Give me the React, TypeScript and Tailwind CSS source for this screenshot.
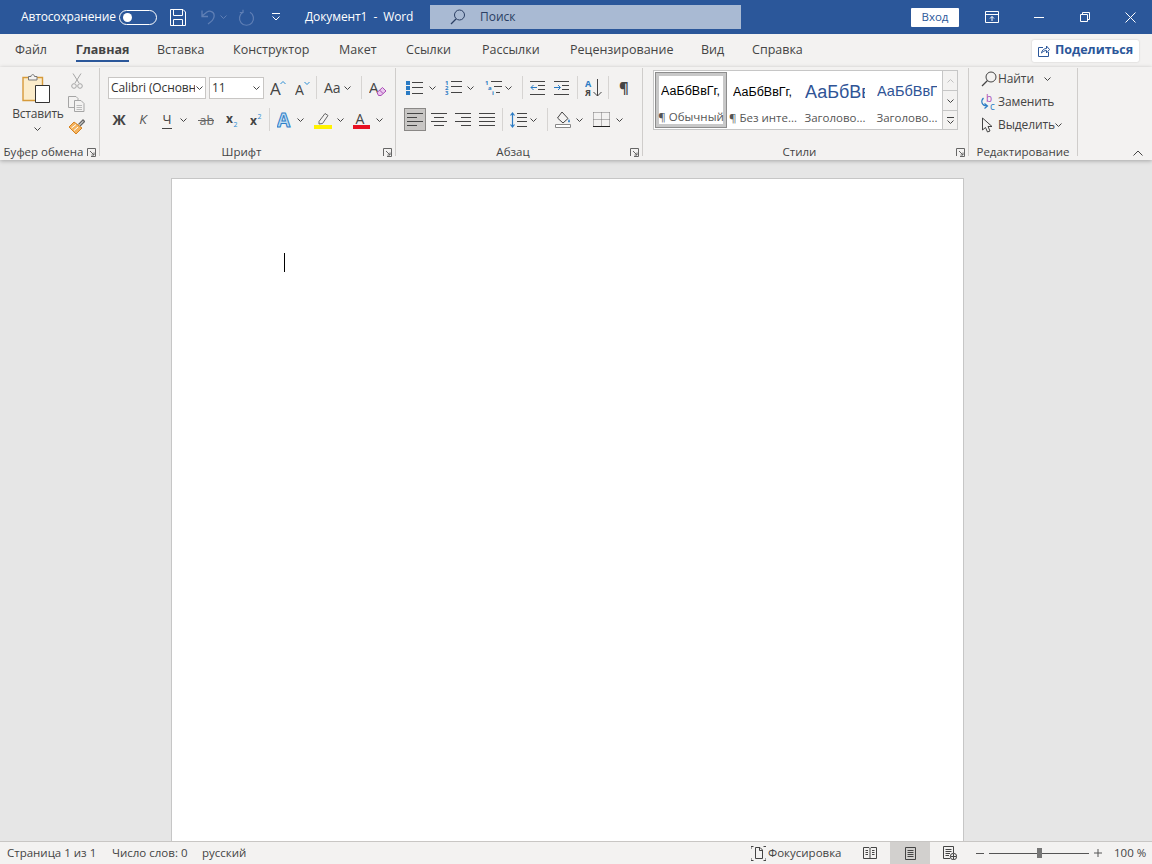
import React from "react";

const G = "#444444";
const Chev = ({ className = "", color = G }: { className?: string; color?: string }) => (
  <svg width="7" height="4" viewBox="0 0 7 4" className={`shrink-0 ${className}`}>
    <path d="M.5.5 3.5 3.5 6.5.5" fill="none" stroke={color} strokeWidth="1" />
  </svg>
);
const Sep = ({ className = "" }: { className?: string }) => <div className={`w-px h-[23px] bg-[#d6d4d2] shrink-0 ${className}`} />;
const Ico = ({ w, h, className = "", children }: { w: number; h: number; className?: string; children: React.ReactNode }) => (
  <svg width={w} height={h} viewBox={`0 0 ${w} ${h}`} className={`shrink-0 ${className}`} fill="none">{children}</svg>
);
const Lines = ({ rows, stroke = G }: { rows: [number, number, number][]; stroke?: string }) => (
  <>{rows.map(([x1, x2, y], i) => <path key={i} d={`M${x1} ${y}.5H${x2}`} stroke={stroke} />)}</>
);
const Launcher = () => (
  <Ico w={9} h={9} className="mr-[3px]">
    <path d="M.5 8V.5H8.5V8.5H4" stroke="#666" />
    <path d="M3 3 7 7M7 4.5V7H4.5" stroke="#666" />
  </Ico>
);
const Group = ({ label, launcher, width, pt = "pt-[8px]", children }: { label: string; launcher?: boolean; width: string; pt?: string; children: React.ReactNode }) => (
  <div className={`${width} shrink-0 h-[88px] mt-px border-r border-[#cfcdcb] flex flex-col ${pt}`}>
    <div className="flex-1 min-h-0">{children}</div>
    <div className="h-[16px] mb-[-4px] flex items-center relative text-[11.5px] text-[#444] leading-[16px]">
      <span className="flex-1 text-center">{label}</span>
      {launcher && <Launcher />}
    </div>
  </div>
);
const Row = ({ className = "", children }: { className?: string; children: React.ReactNode }) => (
  <div className={`flex items-center h-[23px] ${className}`}>{children}</div>
);
const Tab = ({ className = "", children }: { className?: string; children: React.ReactNode }) => (
  <span className={`text-[12.5px] text-[#444] whitespace-nowrap ${className}`}>{children}</span>
);
const StyleItem = ({ sample, label, sel, sampleClass }: { sample: string; label: string; sel?: boolean; sampleClass: string }) => (
  <div className={`w-[72px] h-[56px] shrink-0 overflow-hidden ${sel ? "border border-[#8d8d8d]" : ""}`}>
    <div className={`h-full flex flex-col items-center ${sel ? "border-[3px] border-[#c8c8c8]" : "pt-[4px] px-[4px]"}`}>
      <div className={`w-[60px] h-[32px] flex items-center overflow-hidden whitespace-nowrap ${sampleClass}`}>{sample}</div>
      <div className="text-[11.5px] text-[#555] whitespace-nowrap mt-[3px] leading-[14px]">{label}</div>
    </div>
  </div>
);
const ScrollBtn = ({ children, className = "" }: { children?: React.ReactNode; className?: string }) => (
  <div className={`h-[20px] flex flex-col items-center justify-center border-[#c6c6c6] bg-[#f3f2f1] ${className}`}>{children}</div>
);

export default function App() {
  return (
    <div className="w-[1152px] h-[864px] overflow-hidden flex flex-col bg-[#e6e6e6] font-['Open_Sans','Noto_Sans',sans-serif]">
      {/* Title bar */}
      <div className="h-[34px] shrink-0 bg-[#2b579a] flex items-center text-white">
        <span className="ml-[21px] w-[92px] text-[12px] tracking-[-0.15px] whitespace-nowrap">Автосохранение</span>
        <div className="ml-[6px] w-[38px] h-[15px] rounded-full border border-white flex items-center pl-[3px]">
          <div className="w-[9px] h-[9px] rounded-full bg-white" />
        </div>
        <Ico w={16} h={17} className="ml-[13px]">
          <path d="M.5.5H13L15.5 3V16.5H.5Z" stroke="#fff" />
          <path d="M3.5 1V6.5H12.5V1M3.5 16V10.5H12.5V16" stroke="#fff" />
        </Ico>
        <Ico w={16} h={16} className="ml-[14px]">
          <path d="M2 1.5V7.5H8M2 7 7 3C10 1 15 3 14 8 13.5 11 11 13 8 15" stroke="#5f7fb5" strokeWidth="1.3" />
        </Ico>
        <Chev className="ml-[4px]" color="#5f7fb5" />
        <Ico w={17} h={17} className="ml-[11px]">
          <path d="M12 3.2A7 7 0 1 1 5 3.2M5 .8 5 3.5H1.8" stroke="#5f7fb5" strokeWidth="1.2" />
        </Ico>
        <Ico w={8} h={8} className="ml-[17px]">
          <path d="M0 .5H8M.5 3.5 4 7 7.5 3.5" stroke="#fff" />
        </Ico>
        <span className="ml-[25px] w-[106px] text-[12px] whitespace-pre tracking-[-0.1px]">Документ1  -  Word</span>
        <div className="ml-[19px] w-[311px] h-[24px] bg-[#a9bad3] flex items-center text-[#2b3f63]">
          <Ico w={16} h={16} className="ml-[20px]">
            <circle cx="9.5" cy="6" r="5" stroke="#2b3f63" />
            <path d="M6 10 1 15" stroke="#2b3f63" strokeWidth="1.3" />
          </Ico>
          <span className="ml-[14px] text-[12px]">Поиск</span>
        </div>
        <div className="ml-[170px] w-[48px] h-[19px] bg-white rounded-[1px] flex items-center justify-center text-[11.5px] text-[#2b579a]">Вход</div>
        <Ico w={14} h={12} className="ml-[26px]">
          <path d="M.5.5H13.5V11.5H.5ZM.5 3.5H13.5M7 10V5.5M5 7.5 7 5.5 9 7.5" stroke="#fff" />
        </Ico>
        <div className="ml-[35px] w-[10px] h-px bg-white" />
        <Ico w={10} h={10} className="ml-[36px]">
          <path d="M.5 2.5H7.5V9.5H.5ZM2.5 2.5V.5H9.5V7.5H7.5" stroke="#fff" />
        </Ico>
        <Ico w={11} h={11} className="ml-[35px]">
          <path d="M.5.5 10.5 10.5M10.5.5.5 10.5" stroke="#fff" />
        </Ico>
      </div>

      {/* Tabs */}
      <div className="h-[33px] shrink-0 bg-[#f3f2f1] flex items-center">
        <Tab className="ml-[15px]">Файл</Tab>
        <div className="ml-[29px] w-[53px] h-full flex flex-col items-center justify-center relative">
          <span className="text-[12.5px] font-bold text-[#444] whitespace-nowrap">Главная</span>
          <div className="absolute bottom-[5px] left-0 right-0 h-[2px] bg-[#2b579a]" />
        </div>
        <Tab className="ml-[28px] w-[46px]">Вставка</Tab>
        <Tab className="ml-[30px] w-[76px]">Конструктор</Tab>
        <Tab className="ml-[30px] w-[38px]">Макет</Tab>
        <Tab className="ml-[29px] w-[44px]">Ссылки</Tab>
        <Tab className="ml-[32px] w-[57px]">Рассылки</Tab>
        <Tab className="ml-[31px] w-[100px]">Рецензирование</Tab>
        <Tab className="ml-[31px] w-[22px]">Вид</Tab>
        <Tab className="ml-[29px] w-[50px]">Справка</Tab>
        <div className="ml-auto mr-[13px] w-[107px] h-[22px] bg-white rounded-[2px] shadow-[0_0_2px_rgba(0,0,0,0.2)] flex items-center justify-center gap-[5px]">
          <Ico w={12} h={12}>
            <path d="M5 2.5H.5V11.5H10.5V7M3.5 8C4 5 6 3.5 8.5 3.5V1L11.5 4.5 8.5 8V5.5C6.5 5.5 5 6.5 3.5 8Z" stroke="#2b579a" />
          </Ico>
          <span className="text-[12.5px] font-bold text-[#2b579a] whitespace-nowrap">Поделиться</span>
        </div>
      </div>

      {/* Ribbon */}
      <div className="h-[93px] shrink-0 bg-[#f3f2f1] flex relative z-10 shadow-[0_1px_4px_rgba(0,0,0,0.28)]">
        <Group label="Буфер обмена" launcher width="w-[100px]" pt="pt-[5px]">
          <div className="flex">
            <div className="w-[66px] flex flex-col items-center">
              <Ico w={28} h={30} className="ml-[6px]">
                <path d="M1 4.5H20.5V27.5H1Z" fill="#fbeccb" stroke="#d69a3a" strokeWidth="1.4" />
                <path d="M6.5 7V3.5H9C9 1 12.5 1 12.5 3.5H15V7Z" fill="#f3f2f1" stroke="#777" />
                <path d="M13.5 12.5H27.5V29.5H13.5Z" fill="#fff" stroke="#333" />
              </Ico>
              <span className="text-[12px] text-[#444] leading-[16px] mt-[3px] ml-[10px] whitespace-nowrap tracking-[-0.2px]">Вставить</span>
              <Chev className="mt-[5px] ml-[9px]" />
            </div>
            <div className="flex flex-col items-start ml-[2px]">
              <Ico w={12} h={16} className="ml-[3px] mt-0">
                <path d="M2 .5 8 10M10 .5 4 10" stroke="#a5a5a5" />
                <circle cx="3" cy="13" r="2.3" stroke="#a5a5a5" />
                <circle cx="9" cy="13" r="2.3" stroke="#a5a5a5" />
              </Ico>
              <Ico w={17} h={16} className="mt-[7px]">
                <path d="M.5.5H8L10 2.5V11.5H.5Z" stroke="#a5a5a5" />
                <path d="M6.5 4.5H13L16 7.5V15.5H6.5Z" fill="#f3f2f1" stroke="#a5a5a5" />
                <path d="M8.5 9.5H14M8.5 11.5H14M8.5 13.5H14" stroke="#bbb" />
              </Ico>
              <Ico w={17} h={16} className="mt-[7px]">
                <path d="M10.5 5.5 15 1l1.5 1.5L12 7" stroke="#666" strokeWidth="1.4" />
                <path d="M6 3 14 9 8 15 1 8Z" fill="#f4b35e" stroke="#d6821f" />
                <path d="M3.5 9 8 5.5M6 11.5 10 8" stroke="#fff" />
              </Ico>
            </div>
          </div>
        </Group>

        <Group label="Шрифт" launcher width="w-[296px]">
          <Row>
            <div className="ml-[8px] w-[98px] h-[22px] bg-white border border-[#c8c6c4] flex items-center pl-[2px] pr-[2px] text-[12px] text-[#333]">
              <span className="w-[85px] overflow-hidden whitespace-nowrap tracking-[-0.1px]">Calibri (Основной</span>
              <Chev className="ml-[1px]" />
            </div>
            <div className="ml-[3px] w-[55px] h-[22px] bg-white border border-[#c8c6c4] flex items-center justify-between pl-[2px] pr-[3px] text-[12px] text-[#333]">
              <span>11</span>
              <Chev />
            </div>
            <Ico w={16} h={18} className="ml-[6px]">
              <text x="0" y="16" fontSize="17" fontFamily="Open Sans" fill={G}>A</text>
              <path d="M10.5 5 13 2.5 15.5 5" stroke="#2a8dd4" />
            </Ico>
            <Ico w={15} h={16} className="ml-[9px]">
              <text x="0" y="14.5" fontSize="14" fontFamily="Open Sans" fill={G}>A</text>
              <path d="M9.5 2 12 4.5 14.5 2" stroke="#2a8dd4" />
            </Ico>
            <Sep className="ml-[6px]" />
            <span className="ml-[7px] w-[18px] text-[14px] text-[#444] whitespace-nowrap">Aa</span>
            <Chev className="ml-[2px]" />
            <Sep className="ml-[10px]" />
            <Ico w={18} h={18} className="ml-[7px]">
              <text x="0" y="14" fontSize="15" fontFamily="Open Sans" fill={G}>A</text>
              <path d="M8 13.5 13.5 8.5 17 12 12 16.5H9.5Z" fill="#e9c7ee" stroke="#a94bb5" />
              <path d="M10.5 11 14 14.5" stroke="#a94bb5" />
            </Ico>
          </Row>
          <Row className="mt-[9px]">
            <span className="ml-[11px] w-[16px] text-[14px] leading-none font-bold text-[#444] text-center">Ж</span>
            <span className="ml-[11px] w-[10px] text-[13.5px] leading-none italic text-[#555] text-center">К</span>
            <span className="ml-[14px] w-[10px] text-[13px] leading-[17px] text-[#444] text-center border-b border-[#444]">Ч</span>
            <Chev className="ml-[8px]" />
            <Ico w={16} h={14} className="ml-[11px]">
              <text x="1.5" y="12" fontSize="12.5" fontFamily="Open Sans" fill="#666">ab</text>
              <path d="M0 7.5H16" stroke="#666" />
            </Ico>
            <Ico w={12} h={14} className="ml-[12px]">
              <text x="0" y="10" fontSize="12" fontWeight="700" fontFamily="Open Sans" fill={G}>x</text>
              <text x="7.5" y="14" fontSize="7" fontFamily="Open Sans" fill="#2a8dd4">2</text>
            </Ico>
            <Ico w={12} h={14} className="ml-[12px]">
              <text x="0" y="12" fontSize="12" fontWeight="700" fontFamily="Open Sans" fill={G}>x</text>
              <text x="7.5" y="6" fontSize="7" fontFamily="Open Sans" fill="#2a8dd4">2</text>
            </Ico>
            <Sep className="ml-[7px]" />
            <Ico w={16} h={16} className="ml-[7px]">
              <text x="0" y="15" fontSize="19" fontWeight="700" fontFamily="Open Sans" fill="#bfdcf2" stroke="#2f80c9" strokeWidth="1">A</text>
            </Ico>
            <Chev className="ml-[4px]" />
            <Ico w={18} h={18} className="ml-[10px]">
              <path d="M5 10.5 11 2.5 14 4.5 8.5 12.5 5 13Z" stroke="#666" />
              <path d="M0 14H18V18H0Z" fill="#fff200" />
            </Ico>
            <Chev className="ml-[5px]" />
            <Ico w={17} h={18} className="ml-[9px]">
              <text x="2.5" y="12.5" fontSize="14" fontFamily="Open Sans" fill={G}>A</text>
              <path d="M0 14H17V18H0Z" fill="#e81123" />
            </Ico>
            <Chev className="ml-[6px]" />
          </Row>
        </Group>

        <Group label="Абзац" launcher width="w-[247px]">
          <Row>
            <Ico w={17} h={14} className="ml-[10px]">
              <path d="M0 0H4V4H0ZM0 5H4V9H0ZM0 10H4V14H0Z" fill="#2a7bc4" />
              <Lines rows={[[6, 17, 1], [6, 17, 6], [6, 17, 12]]} />
            </Ico>
            <Chev className="ml-[6px]" />
            <Ico w={17} h={15} className="ml-[9px]">
              <text x="0" y="5" fontSize="6" fontWeight="700" fontFamily="Open Sans" fill="#2a7bc4">1</text>
              <text x="0" y="10" fontSize="6" fontWeight="700" fontFamily="Open Sans" fill="#2a7bc4">2</text>
              <text x="0" y="15" fontSize="6" fontWeight="700" fontFamily="Open Sans" fill="#2a7bc4">3</text>
              <Lines rows={[[6, 17, 1], [6, 17, 6], [6, 17, 12]]} />
            </Ico>
            <Chev className="ml-[5px]" />
            <Ico w={17} h={15} className="ml-[11px]">
              <text x="0" y="5" fontSize="6" fontWeight="700" fontFamily="Open Sans" fill="#2a7bc4">1</text>
              <text x="3" y="10" fontSize="6" fontWeight="700" fontFamily="Open Sans" fill="#2a7bc4">a</text>
              <text x="7" y="15" fontSize="6" fontWeight="700" fontFamily="Open Sans" fill="#2a7bc4">i</text>
              <Lines rows={[[6, 17, 1], [9, 17, 6], [11, 15, 12]]} />
            </Ico>
            <Chev className="ml-[3px]" />
            <Sep className="ml-[10px]" />
            <Ico w={15} h={14} className="ml-[7px]">
              <Lines rows={[[0, 15, 0], [8, 15, 4], [8, 15, 8], [0, 15, 13]]} />
              <path d="M7 6.5H1M3.5 4 1 6.5 3.5 9" stroke="#2a7bc4" />
            </Ico>
            <Ico w={15} h={14} className="ml-[9px]">
              <Lines rows={[[0, 15, 0], [8, 15, 4], [8, 15, 8], [0, 15, 13]]} />
              <path d="M0 6.5H6M4 4 6.5 6.5 4 9" stroke="#2a7bc4" />
            </Ico>
            <Sep className="ml-[8px]" />
            <Ico w={17} h={18} className="ml-[7px]">
              <text x="0" y="8" fontSize="9" fontWeight="700" fontFamily="Open Sans" fill="#2a7bc4">A</text>
              <text x="0" y="17" fontSize="9" fontWeight="700" fontFamily="Open Sans" fill={G}>Я</text>
              <path d="M12.5 0V17M8.5 13 12.5 17 16.5 13" stroke={G} />
            </Ico>
            <Sep className="ml-[6px]" />
            <span className="ml-[10px] text-[15px] leading-none font-bold text-[#444]">¶</span>
          </Row>
          <Row className="mt-[9px]">
            <div className="ml-[8px] w-[22px] h-[23px] bg-[#c8c6c4] border border-[#8a8886] flex items-center justify-center">
              <Ico w={16} h={13}>
                <Lines rows={[[0, 16, 0], [0, 10, 4], [0, 16, 8], [0, 10, 12]]} />
              </Ico>
            </div>
            <Ico w={16} h={13} className="ml-[5px]">
              <Lines rows={[[0, 16, 0], [3, 13, 4], [0, 16, 8], [3, 13, 12]]} />
            </Ico>
            <Ico w={16} h={13} className="ml-[8px]">
              <Lines rows={[[0, 16, 0], [6, 16, 4], [0, 16, 8], [6, 16, 12]]} />
            </Ico>
            <Ico w={16} h={13} className="ml-[8px]">
              <Lines rows={[[0, 16, 0], [0, 16, 4], [0, 16, 8], [0, 16, 12]]} />
            </Ico>
            <Sep className="ml-[7px]" />
            <Ico w={17} h={16} className="ml-[7px]">
              <Lines rows={[[7, 17, 1], [7, 17, 5], [7, 17, 9], [7, 17, 14]]} />
              <path d="M2.5 1V15M.5 3.5 2.5 1 4.5 3.5M.5 12.5 2.5 15 4.5 12.5" stroke="#2a7bc4" strokeWidth="1.2" />
            </Ico>
            <Chev className="ml-[3px]" />
            <Sep className="ml-[10px]" />
            <Ico w={16} h={17} className="ml-[7px]">
              <path d="M7 1 13 7.5 8 12 2.5 7Z" stroke={G} />
              <path d="M14 8C13 10 12.5 11 14 11.5 15.5 11 15 10 14 8Z" fill="#2a7bc4" />
              <path d="M.5 13.5H15.5V16.5H.5Z" fill="#fff" stroke="#888" />
            </Ico>
            <Chev className="ml-[5px]" />
            <Ico w={17} h={15} className="ml-[10px]">
              <path d="M.5 .5H17M.5 .5V15M16.5 .5V15M8.5 .5V14M.5 7.5H17" stroke="#777" strokeDasharray="1 1" />
              <path d="M0 14.5H17" stroke="#222" />
            </Ico>
            <Chev className="ml-[6px]" />
          </Row>
        </Group>

        <Group label="Стили" launcher width="w-[326px]" pt="pt-[2px]">
          <div className="ml-[10px] w-[305px] h-[60px] bg-white border border-[#c6c6c6] flex">
            <div className="flex-1 flex items-center pl-px min-w-0 overflow-hidden">
              <StyleItem sel sample="АаБбВвГг," label="¶ Обычный" sampleClass="text-[12.5px] text-black font-['Liberation_Sans',sans-serif]" />
              <StyleItem sample="АаБбВвГг," label="¶ Без инте..." sampleClass="text-[12.5px] text-black font-['Liberation_Sans',sans-serif]" />
              <StyleItem sample="АаБбВвГг" label="Заголово..." sampleClass="text-[18px] text-[#2f5496] font-['Liberation_Sans',sans-serif]" />
              <StyleItem sample="АаБбВвГг" label="Заголово..." sampleClass="text-[14.5px] text-[#2f5496] font-['Liberation_Sans',sans-serif]" />
            </div>
            <div className="w-[15px] shrink-0 flex flex-col border-l border-[#c6c6c6]">
              <ScrollBtn className="border-b"><Chev className="rotate-180" color="#c0c0c0" /></ScrollBtn>
              <ScrollBtn className="border-b"><Chev /></ScrollBtn>
              <ScrollBtn className="flex-1">
                <div className="w-[7px] h-px bg-[#444] mb-[2px]" />
                <Chev />
              </ScrollBtn>
            </div>
          </div>
        </Group>

        <Group label="Редактирование" width="w-[109px]" pt="pt-0">
          <div className="flex flex-col -mt-[1px] text-[12px] text-[#444] tracking-[-0.1px]">
            <Row>
              <Ico w={16} h={16} className="ml-[12px]">
                <circle cx="10" cy="6" r="5" stroke={G} />
                <path d="M6.5 9.5 1 15" stroke={G} strokeWidth="1.3" />
              </Ico>
              <span className="ml-[1px] w-[36px]">Найти</span>
              <Chev className="ml-[10px]" />
            </Row>
            <Row>
              <Ico w={16} h={16} className="ml-[11px]">
                <text x="6" y="8" fontSize="10" fontFamily="Open Sans" fill="#a94bb5">b</text>
                <text x="10" y="16" fontSize="10" fontFamily="Open Sans" fill="#2a7bc4">c</text>
                <path d="M3.5 4C.5 7 1.5 11.5 7 12M4.5 9.5 7.5 12 4.5 14.5" stroke="#2a7bc4" strokeWidth="1.2" />
              </Ico>
              <span className="ml-[2px]">Заменить</span>
            </Row>
            <Row>
              <Ico w={13} h={16} className="ml-[12px]">
                <path d="M1.5 1V13L4.5 10.5 6.5 15 9 14 7 9.5H11Z" stroke={G} />
              </Ico>
              <span className="ml-[4px] w-[56px]">Выделить</span>
              <Chev className="ml-[1px]" />
            </Row>
          </div>
        </Group>

        <div className="flex-1 flex items-end justify-end pr-[9px] pb-[4px]">
          <Ico w={10} h={6}>
            <path d="M.5 5.5 5 1 9.5 5.5" stroke={G} />
          </Ico>
        </div>
      </div>

      {/* Document canvas */}
      <div className="flex-1 min-h-0 pl-[171px] pt-[18px] overflow-hidden">
        <div className="w-[793px] h-full bg-white border border-[#c6c6c6] border-b-0 pl-[112px] pt-[74px]">
          <div className="w-px h-[19px] bg-black" />
        </div>
      </div>

      {/* Status bar */}
      <div className="h-[23px] shrink-0 bg-[#f3f2f1] border-t border-[#c8c6c4] flex items-center text-[11.5px] text-[#444] relative z-10">
        <span className="ml-[7px] w-[85px] whitespace-nowrap">Страница 1 из 1</span>
        <span className="ml-[20px] w-[72px] whitespace-nowrap">Число слов: 0</span>
        <span className="ml-[18px] w-[44px] whitespace-nowrap">русский</span>
        <Ico w={15} h={15} className="ml-[505px]">
          <path d="M0 3V.5H2.5M12.5.5H15M0 12V14.5H2.5M12.5 14.5H15V12" stroke={G} />
          <path d="M4.5 1.5H9L11.5 4V12.5H4.5ZM8.5 1.5V4.5H11.5" stroke={G} />
        </Ico>
        <span className="ml-[2px] w-[71px] whitespace-nowrap">Фокусировка</span>
        <Ico w={14} h={12} className="ml-[24px]">
          <path d="M.5.5H6L7 1.5 8 .5H13.5V11.5H.5ZM7 1.5V11M2.5 3.5H5M2.5 5.5H5M2.5 7.5H5M9 3.5H11.5M9 5.5H11.5M9 7.5H11.5" stroke={G} />
        </Ico>
        <div className="ml-[13px] w-[40px] h-full bg-[#d2d0ce] flex items-center justify-center">
          <Ico w={11} h={13}>
            <path d="M.5.5H10.5V12.5H.5ZM2.5 3.5H8.5M2.5 5.5H8.5M2.5 7.5H8.5M2.5 9.5H8.5" stroke={G} />
          </Ico>
        </div>
        <Ico w={14} h={14} className="ml-[13px]">
          <path d="M7 12.5H.5V.5H10.5V7M2.5 3.5H8.5M2.5 5.5H8.5M2.5 7.5H7M2.5 9.5H6" stroke={G} />
          <circle cx="10.5" cy="10.5" r="3.2" fill="#f3f2f1" stroke={G} />
          <path d="M7.5 10.5H13.5M10.5 7.5V13.5" stroke={G} />
        </Ico>
        <div className="ml-[19px] w-[8px] h-px bg-[#555]" />
        <div className="ml-[5px] w-[100px] h-px bg-[#555] flex items-center pl-[48px]">
          <div className="w-[5px] h-[10px] bg-[#777] shrink-0" />
        </div>
        <Ico w={8} h={8} className="ml-[5px]">
          <path d="M0 4H8M4 0V8" stroke="#555" />
        </Ico>
        <span className="ml-[12px] whitespace-nowrap">100 %</span>
      </div>
    </div>
  );
}
